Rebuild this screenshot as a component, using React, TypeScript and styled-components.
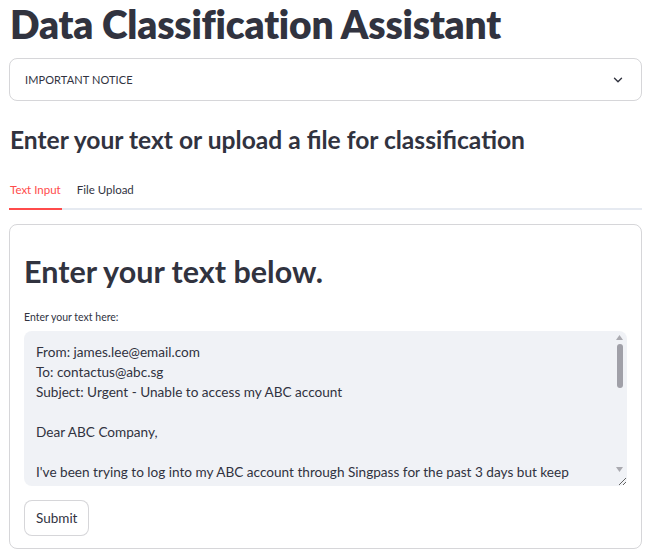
import { createGlobalStyle, styled } from "styled-components";

const GlobalStyle = createGlobalStyle`
  body {
    margin: 0;
    background: #ffffff;
    font-family: "Lato", "Liberation Sans", sans-serif;
    color: rgb(49, 51, 63);
  }
`;

const EMAIL = `From: james.lee@email.com
To: contactus@abc.sg
Subject: Urgent - Unable to access my ABC account

Dear ABC Company,

I've been trying to log into my ABC account through Singpass for the past 3 days but keep
getting an error message. My NRIC is S1234567A and I need to update my contact details
urgently.

Could you please help me look into this?

Thank you,
James Lee
Mobile: 9123 4567`;

const ChevronDown = () => (
  <svg width="14" height="14" viewBox="0 0 24 24" fill="none">
    <path
      d="M6 9l6 6 6-6"
      stroke="rgb(49, 51, 63)"
      strokeWidth="2.4"
      strokeLinecap="round"
      strokeLinejoin="round"
    />
  </svg>
);

const Arrow = ({ up }: { up?: boolean }) => (
  <svg width="7" height="5" viewBox="0 0 7 5">
    <path d={up ? "M0 5h7L3.5 0z" : "M0 0h7L3.5 5z"} fill="rgb(170, 170, 176)" />
  </svg>
);

export default function App() {
  return (
    <Page>
      <GlobalStyle />
      <Title>Data Classification Assistant</Title>

      <Expander>
        <span>IMPORTANT NOTICE</span>
        <ChevronDown />
      </Expander>

      <Subheader>Enter your text or upload a file for classification</Subheader>

      <TabList>
        <Tab $active>Text Input</Tab>
        <Tab>File Upload</Tab>
      </TabList>

      <Card>
        <CardTitle>Enter your text below.</CardTitle>
        <Label>Enter your text here:</Label>
        <Field>
          <TextArea defaultValue={EMAIL} spellCheck={false} />
          <ScrollBar>
            <Arrow up />
            <Thumb />
            <Spacer />
            <Arrow />
          </ScrollBar>
        </Field>
        <Button>Submit</Button>
      </Card>
    </Page>
  );
}

const Page = styled.div`
  display: flex;
  flex-direction: column;
  padding: 0 9px;
  width: 633px;
`;

const Title = styled.h1`
  margin: 0;
  padding: 1px 1px 0;
  font-size: 38.9px;
  font-weight: 800;
  line-height: 46px;
  letter-spacing: -0.2px;
  color: rgb(49, 51, 63);
`;

const Expander = styled.div`
  margin-top: 11px;
  height: 41px;
  display: flex;
  align-items: center;
  justify-content: space-between;
  padding: 0 16px 0 15px;
  border: 1px solid rgba(49, 51, 63, 0.2);
  border-radius: 8px;
  font-size: 11px;
  letter-spacing: 0.1px;
`;

const Subheader = styled.h2`
  margin: 23px 0 0;
  padding-left: 1px;
  font-size: 24.6px;
  font-weight: 700;
  line-height: 32px;
  color: rgb(49, 51, 63);
`;

const TabList = styled.div`
  margin-top: 26px;
  display: flex;
  gap: 14px;
  border-bottom: 2px solid rgb(230, 234, 241);
`;

const Tab = styled.div<{ $active?: boolean }>`
  padding: 0 1px 10px;
  margin-bottom: -2px;
  font-size: 11.5px;
  line-height: 16px;
  color: ${({ $active }) => ($active ? "rgb(255, 75, 75)" : "rgb(49, 51, 63)")};
  border-bottom: 2px solid
    ${({ $active }) => ($active ? "rgb(255, 75, 75)" : "transparent")};
`;

const Card = styled.div`
  margin-top: 14px;
  display: flex;
  flex-direction: column;
  align-items: flex-start;
  padding: 18px 14px 12px 14px;
  border: 1px solid rgba(49, 51, 63, 0.2);
  border-radius: 8px;
`;

const CardTitle = styled.h1`
  margin: 8px 0 0;
  font-size: 30.5px;
  font-weight: 700;
  line-height: 40px;
  color: rgb(49, 51, 63);
`;

const Label = styled.label`
  margin-top: 19px;
  font-size: 10.5px;
  line-height: 14px;
`;

const Field = styled.div`
  position: relative;
  margin-top: 7px;
  width: 100%;
  display: flex;
`;

const TextArea = styled.textarea`
  width: 100%;
  height: 155px;
  box-sizing: border-box;
  padding: 11px 24px 10px 12px;
  border: none;
  border-radius: 8px;
  background: rgb(240, 242, 246);
  font-family: "Lato", "Liberation Sans", sans-serif;
  font-size: 13.6px;
  line-height: 20px;
  color: rgb(49, 51, 63);
  overflow-y: scroll;
  resize: vertical;
  outline: none;
`;

const ScrollBar = styled.div`
  position: absolute;
  top: 4px;
  right: 3px;
  bottom: 14px;
  width: 9px;
  display: flex;
  flex-direction: column;
  align-items: center;
  gap: 4px;
  pointer-events: none;
`;

const Thumb = styled.div`
  width: 6px;
  height: 44px;
  border-radius: 3px;
  background: rgb(160, 160, 168);
`;

const Spacer = styled.div`
  flex: 1;
`;

const Button = styled.button`
  margin-top: 14px;
  height: 36px;
  padding: 0 11px;
  background: #ffffff;
  border: 1px solid rgba(49, 51, 63, 0.2);
  border-radius: 8px;
  font-family: "Lato", "Liberation Sans", sans-serif;
  font-size: 13.5px;
  color: rgb(49, 51, 63);
`;
